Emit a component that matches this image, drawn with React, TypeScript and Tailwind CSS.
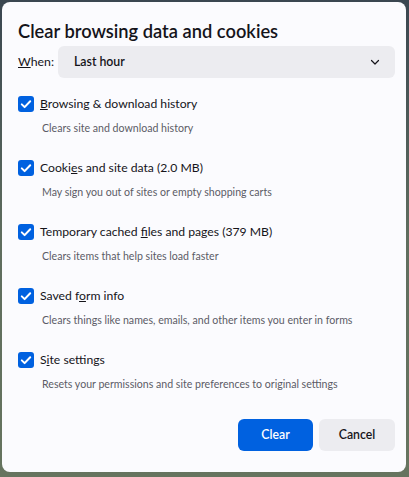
import React, { useState } from 'react';

const items = [
  { pre: '', key: 'B', post: 'rowsing & download history', desc: 'Clears site and download history' },
  { pre: 'Cooki', key: 'e', post: 's and site data (2.0 MB)', desc: 'May sign you out of sites or empty shopping carts' },
  { pre: 'Temporary cached ', key: 'f', post: 'iles and pages (379 MB)', desc: 'Clears items that help sites load faster' },
  { pre: 'Saved f', key: 'o', post: 'rm info', desc: 'Clears things like names, emails, and other items you enter in forms' },
  { pre: 'S', key: 'i', post: 'te settings', desc: 'Resets your permissions and site preferences to original settings' },
];

function Check({ checked, onClick }: { checked: boolean; onClick: () => void }) {
  return (
    <button
      onClick={onClick}
      className={`w-4 h-4 rounded-[3px] flex items-center justify-center shrink-0 ${checked ? 'bg-[#0061e0]' : 'bg-white border border-[#8f8f9d]'}`}
    >
      {checked && (
        <svg viewBox="0 0 16 16" className="w-4 h-4">
          <path d="M3.8 8.4 L6.6 11.1 L12.2 5.2" fill="none" stroke="white" strokeWidth="2" strokeLinecap="round" strokeLinejoin="round" />
        </svg>
      )}
    </button>
  );
}

export default function App() {
  const [checked, setChecked] = useState(items.map(() => true));

  return (
    <div
      className="w-[409px] h-[477px] overflow-hidden bg-gradient-to-b from-[#3a4650] via-[#5f6d5e] to-[#66745f] pt-[2px] pl-[2px]"
      style={{ fontFamily: 'Lato, "Noto Sans", sans-serif' }}
    >
      <div className="w-[404px] h-[470px] bg-[#fbfbfe] rounded-[8px] pt-[15px] pl-[16px] pr-[11px] flex flex-col text-[#15141a]">
        <h1 className="h-[28px] leading-[28px] text-[18.3px] font-semibold">Clear browsing data and cookies</h1>

        <div className="mt-[1px] flex items-center h-[32px]">
          <span className="text-[12.3px] w-[40px]"><span className="underline">W</span>hen:</span>
          <div className="flex-1 h-[32px] rounded-[6px] bg-[#ececf0] flex items-center justify-between pl-[16px] pr-[14px]">
            <span className="text-[12.3px] font-semibold">Last hour</span>
            <svg viewBox="0 0 12 12" className="w-[12px] h-[12px]">
              <path d="M2.5 4.5 L6 8 L9.5 4.5" fill="none" stroke="#15141a" strokeWidth="1.2" strokeLinecap="round" strokeLinejoin="round" />
            </svg>
          </div>
        </div>

        <div className="mt-[16px] flex flex-col gap-[22px]">
          {items.map((it, i) => (
            <div key={i} className="flex flex-col">
              <label className="h-[20px] flex items-center gap-[6px] cursor-default">
                <Check
                  checked={checked[i]}
                  onClick={() => setChecked(c => c.map((v, j) => (j === i ? !v : v)))}
                />
                <span className="text-[12.2px] leading-[20px]">
                  {it.pre}<span className="underline">{it.key}</span>{it.post}
                </span>
              </label>
              <p className="mt-[6px] h-[16px] leading-[16px] pl-[24px] text-[10.6px] text-[#5b5b66] whitespace-nowrap">{it.desc}</p>
            </div>
          ))}
        </div>

        <div className="mt-[27px] flex justify-end gap-[6px]">
          <button className="w-[75px] h-[32px] rounded-[6px] bg-[#0061e0] text-white text-[12.3px] font-semibold">Clear</button>
          <button className="w-[76px] h-[32px] rounded-[6px] bg-[#ececf0] text-[#15141a] text-[12.3px] font-semibold">Cancel</button>
        </div>
      </div>
    </div>
  );
}
